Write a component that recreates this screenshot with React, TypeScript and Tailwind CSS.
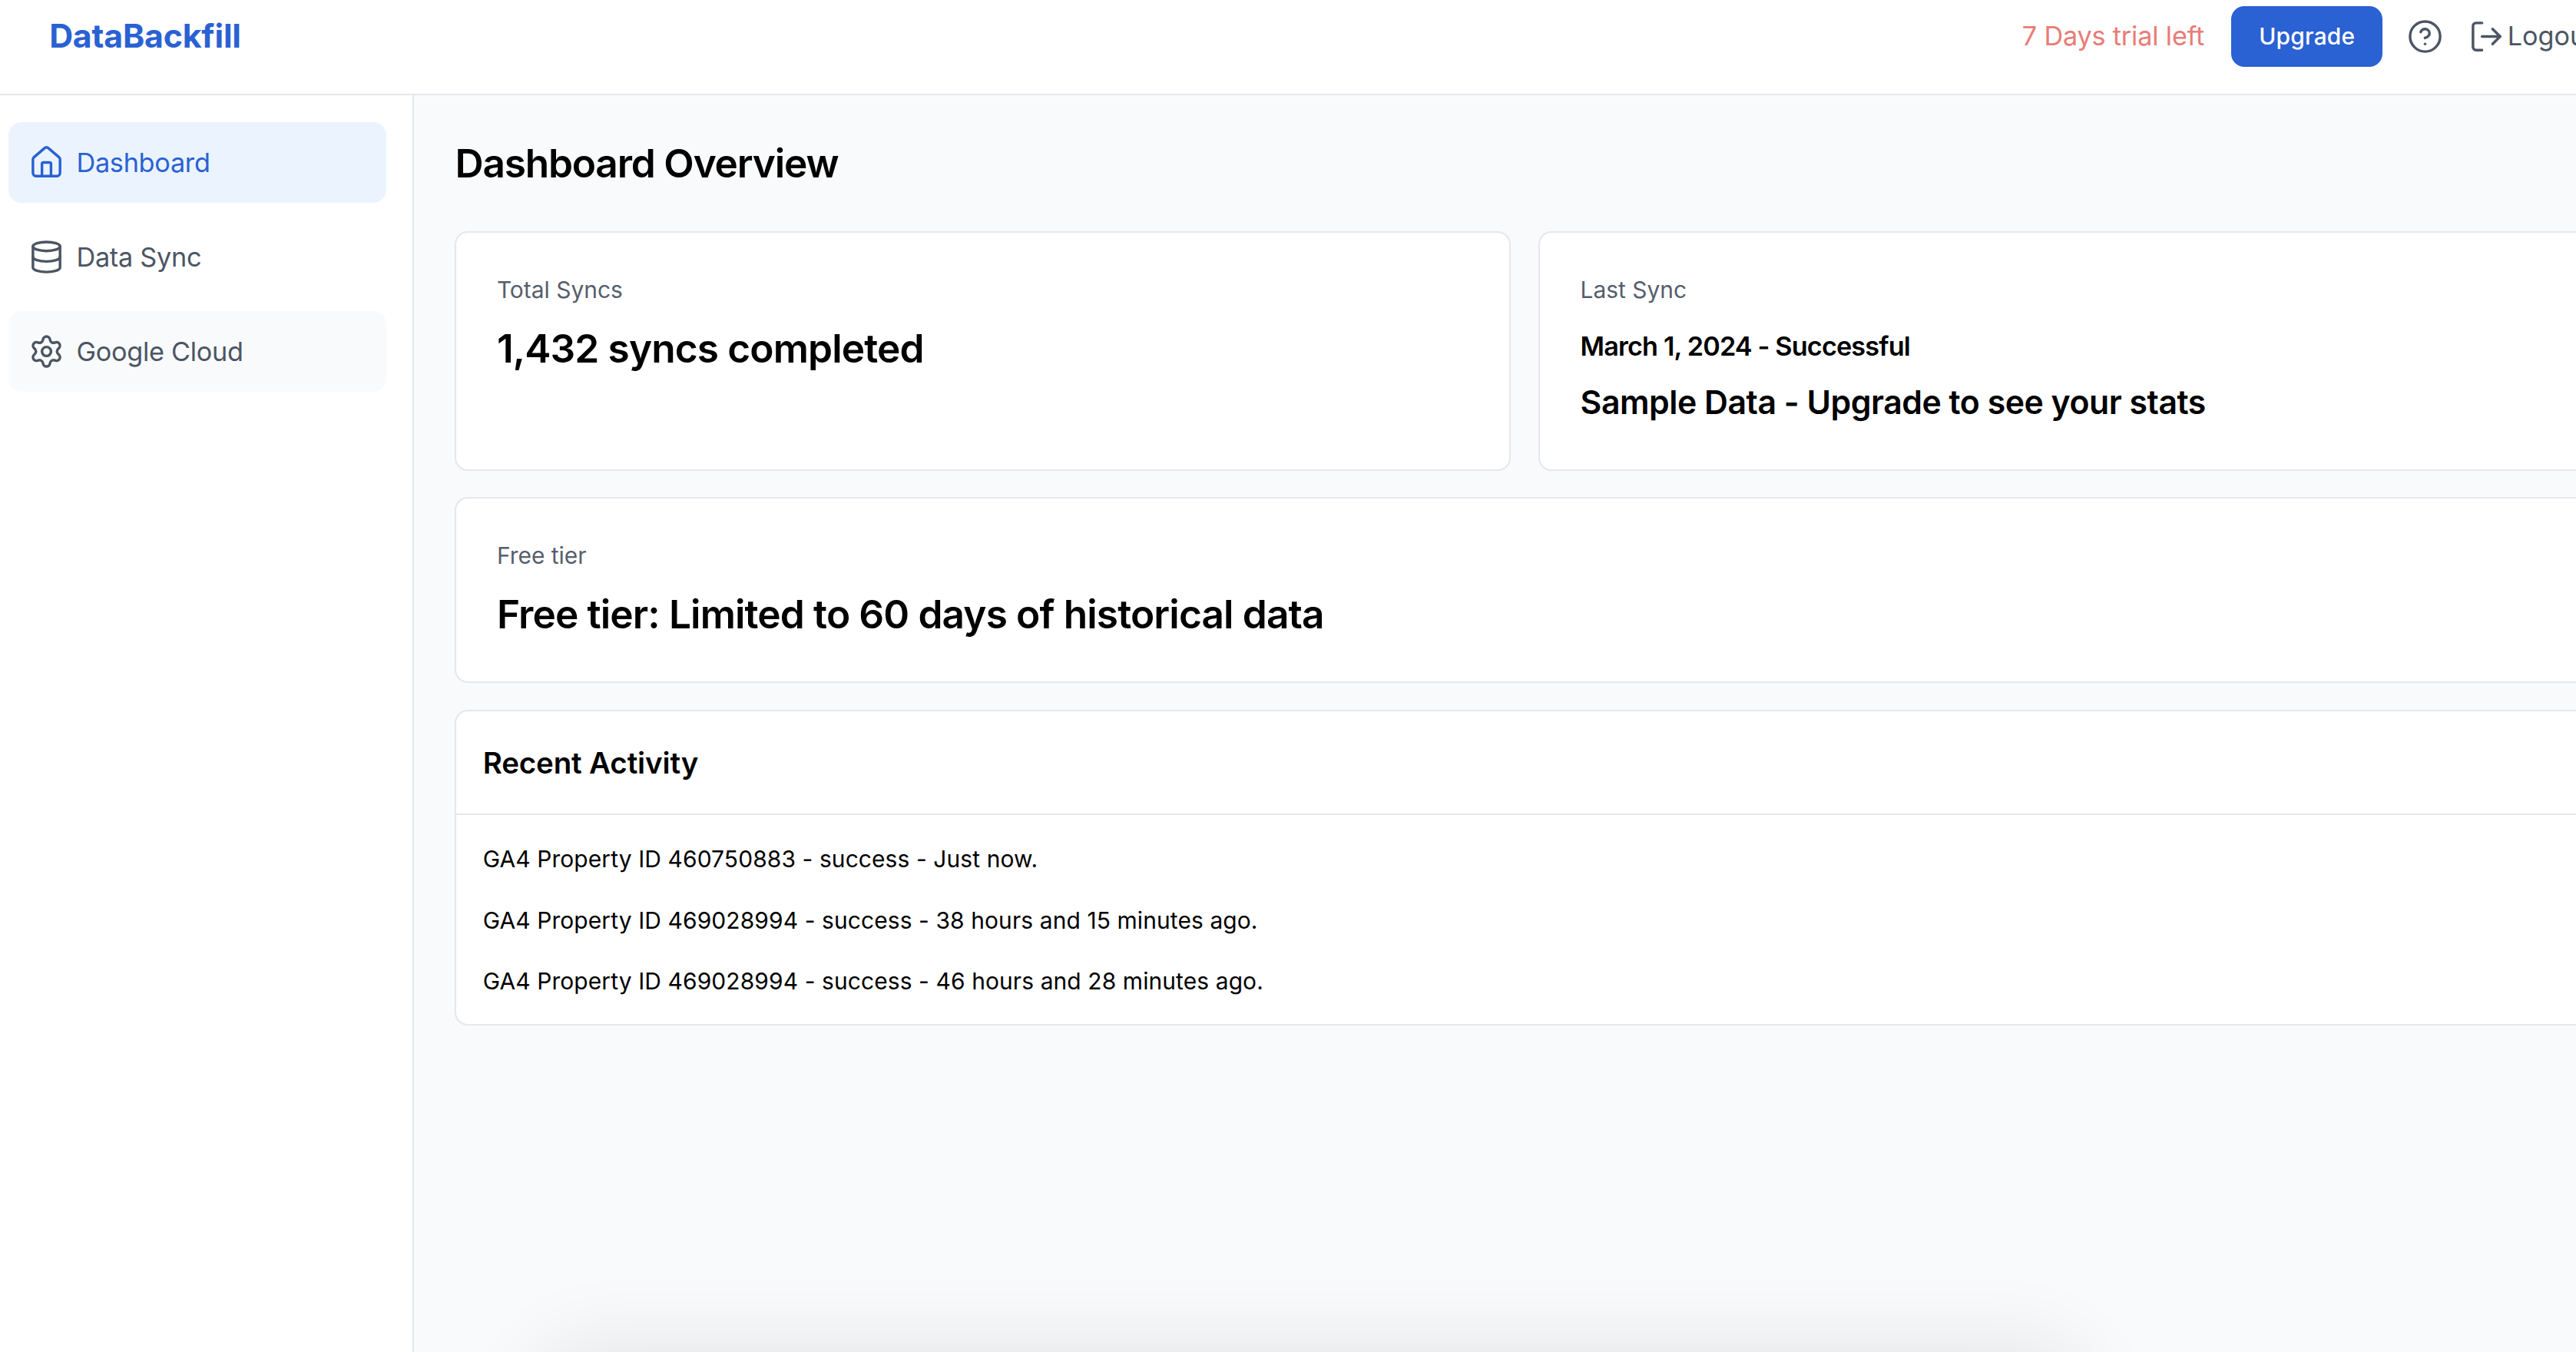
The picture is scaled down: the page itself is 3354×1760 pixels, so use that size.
import { CircleHelp, Database, House, LogOut, Settings, type LucideIcon } from "lucide-react";

const navItems: { label: string; icon: LucideIcon; className: string }[] = [
	{ label: "Dashboard", icon: House, className: "bg-[#ebf4fe] text-[#2a61d3]" },
	{ label: "Data Sync", icon: Database, className: "text-[#4b5563]" },
	{ label: "Google Cloud", icon: Settings, className: "bg-[#f9fafb] text-[#4b5563]" },
];

const activity = [
	"GA4 Property ID 460750883 - success - Just now.",
	"GA4 Property ID 469028994 - success - 38 hours and 15 minutes ago.",
	"GA4 Property ID 469028994 - success - 46 hours and 28 minutes ago.",
];

function Card({ label, children }: { label: string; children: React.ReactNode }) {
	return (
		<div className="rounded-lg border border-[#e5e7eb] bg-white px-[24.5px] pt-[25px] pb-[25px]">
			<p className="text-sm leading-5 text-[#565e6c]">{label}</p>
			{children}
		</div>
	);
}

function Header() {
	return (
		<header className="flex h-[58px] items-center justify-between border-b border-[#e5e7eb] bg-white pt-[8px] pr-[25px] pb-[21px] pl-[30px]">
			<span className="text-xl font-bold tracking-[-0.08px] text-[#2a61d3]">DataBackfill</span>
			<div className="flex items-center">
				<span className="mr-[16.5px] text-base tracking-[-0.08px] text-[#e97c77]">7 Days trial left</span>
				<button className="h-[37px] w-[92px] rounded-lg bg-[#2a61d3] text-sm font-medium tracking-[0.1px] text-white">
					Upgrade
				</button>
				<CircleHelp className="ml-[15px] size-[22px] text-[#4b5563]" strokeWidth={1.75} />
				<div className="ml-[15.5px] flex items-center gap-[1.5px] text-base text-[#4b5563]">
					<LogOut className="size-[22px]" strokeWidth={1.75} />
					<span>Logout</span>
				</div>
			</div>
		</header>
	);
}

function Sidebar() {
	return (
		<aside className="flex w-[252px] shrink-0 flex-col gap-[8.5px] border-r border-[#e5e7eb] bg-white pt-[16.5px] pr-4 pl-[5px]">
			{navItems.map(({ label, icon: Icon, className }) => (
				<a
					key={label}
					className={`flex h-[49px] items-center gap-[7px] rounded-lg pl-[12.5px] text-base tracking-[-0.12px] ${className}`}
				>
					<Icon className="size-[22px]" strokeWidth={1.75} />
					<span>{label}</span>
				</a>
			))}
		</aside>
	);
}

export default function App() {
	return (
		<div className="relative h-[1760px] w-[3354px] overflow-hidden bg-[#f9fafb]">
			<div className="h-[823px] w-[1604px] font-['Inter',sans-serif] text-black [zoom:2.139]">
				<Header />
				<div className="flex h-[765px]">
					<Sidebar />
					<main className="relative flex-1 px-[25px] pt-[25px]">
						<h1 className="text-2xl leading-8 font-semibold tracking-[-0.55px]">Dashboard Overview</h1>
						<div className="mt-[25.5px] grid grid-cols-2 gap-[17px]">
							<Card label="Total Syncs">
								<p className="mt-[9.5px] text-2xl leading-8 font-semibold tracking-[-0.4px]">1,432 syncs completed</p>
							</Card>
							<Card label="Last Sync">
								<p className="mt-[12.5px] text-base leading-6 font-semibold tracking-[-0.4px]">March 1, 2024 - Successful</p>
								<p className="mt-[8px] mb-[1.5px] text-xl leading-7 font-semibold tracking-[-0.22px]">
									Sample Data - Upgrade to see your stats
								</p>
							</Card>
						</div>
						<div className="mt-[16px]">
							<Card label="Free tier">
								<p className="mt-[9.5px] text-2xl leading-8 font-semibold tracking-[-0.4px]">
									Free tier: Limited to 60 days of historical data
								</p>
							</Card>
						</div>
						<section className="mt-[16.5px] rounded-lg border border-[#e5e7eb] bg-white">
							<h2 className="border-b border-[#e5e7eb] px-4 pt-[17.5px] pb-[16.5px] text-lg leading-7 font-semibold tracking-[-0.07px]">
								Recent Activity
							</h2>
							<ul className="flex flex-col gap-[17px] px-4 pt-[17px] pb-[16px] text-sm leading-5 tracking-[0.05px]">
								{activity.map((row, i) => (
									<li key={i}>{row}</li>
								))}
							</ul>
						</section>
						{/* shadow of something that sits just under the fold */}
						<div className="absolute top-[794px] left-[108px] h-[60px] w-[875px] rounded-lg shadow-[0_0_50px_32px_rgba(0,0,0,0.09)]" />
					</main>
				</div>
			</div>
		</div>
	);
}
